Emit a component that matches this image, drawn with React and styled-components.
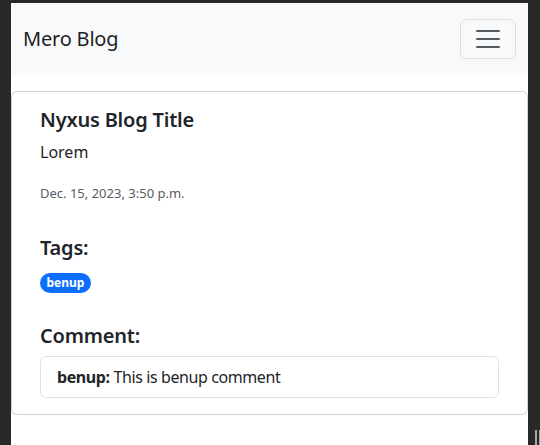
import React from "react";
import styled, { createGlobalStyle } from "styled-components";

const GlobalStyle = createGlobalStyle`
  * {
    box-sizing: border-box;
  }
  html,
  body {
    margin: 0;
    height: 100%;
    background-color: #282828;
  }
  body {
    font-family: "Noto Sans", "Open Sans", sans-serif;
    font-size: 16px;
    line-height: 1.5;
    color: #212529;
  }
`;

// dark browser frame around the page
const Frame = styled.div`
  position: relative;
  min-height: 100vh;
  padding: 3px 12px 0 11px;
`;

const Page = styled.div`
  min-height: calc(100vh - 3px);
  background-color: #fff;
`;

const Grip = styled.div`
  position: absolute;
  right: 0;
  bottom: 0;
  width: 6px;
  height: 15px;
  border-left: 2px solid #a9a9a9;
  border-right: 2px solid #a9a9a9;
  margin-right: -1px;
`;

const Navbar = styled.nav`
  height: 72px;
  padding: 0 12px;
  display: flex;
  align-items: center;
  justify-content: space-between;
  background-color: #f8f9fa;
`;

const Brand = styled.a`
  font-size: 20px;
  line-height: 30px;
  letter-spacing: -0.2px;
  color: rgba(0, 0, 0, 0.9);
  text-decoration: none;
`;

const Toggler = styled.button`
  width: 56px;
  height: 40px;
  padding: 0;
  display: flex;
  align-items: center;
  justify-content: center;
  background: transparent;
  border: 1px solid rgba(0, 0, 0, 0.1);
  border-radius: 6px;
  cursor: pointer;
`;

const Main = styled.main`
  padding-top: 16px;
`;

const Card = styled.article`
  border: 1px solid rgba(0, 0, 0, 0.175);
  border-radius: 6px;
  background-color: #fff;
`;

const CardBody = styled.div`
  display: flex;
  flex-direction: column;
  align-items: flex-start;
  padding: 16px 28px;
`;

const Heading = styled.h5`
  margin: ${(p) => p.$top || 0}px 0 ${(p) => p.$bottom || 0}px;
  font-size: 20px;
  font-weight: 600;
  line-height: 24px;
  letter-spacing: -0.2px;
`;

const Text = styled.p`
  margin: 0 0 16px;
  line-height: 24px;
`;

const DateText = styled.small`
  font-size: 13px;
  color: #595c5f;
`;

const TagRow = styled.div`
  display: flex;
  gap: 4px;
  margin-top: 13px;
`;

const Badge = styled.span`
  height: 20px;
  padding: 0 6.5px;
  display: inline-flex;
  align-items: center;
  font-size: 12px;
  font-weight: 700;
  line-height: 1;
  color: #fff;
  background-color: #0d6efd;
  border-radius: 10px;
`;

const CommentList = styled.ul`
  align-self: stretch;
  margin: 8px 0 0;
  padding: 0;
  list-style: none;
  border: 1px solid #dee2e6;
  border-radius: 6px;
`;

const CommentItem = styled.li`
  padding: 8px 16px;
  line-height: 24px;
  letter-spacing: -0.4px;
`;

const Author = styled.strong`
  font-weight: 700;
`;

const MenuIcon = () => (
  <svg width="30" height="30" viewBox="0 0 30 30">
    <path
      d="M4 7h22M4 15h22M4 23h22"
      stroke="rgba(33,37,41,0.75)"
      strokeWidth="2"
      strokeLinecap="round"
    />
  </svg>
);

const post = {
  title: "Nyxus Blog Title",
  body: "Lorem",
  date: "Dec. 15, 2023, 3:50 p.m.",
  tags: ["benup"],
  comments: [{ user: "benup", text: "This is benup comment" }],
};

const App = () => {
  return (
    <Frame>
      <GlobalStyle />
      <Page>
        <Navbar>
          <Brand href="#">Mero Blog</Brand>
          <Toggler aria-label="Toggle navigation">
            <MenuIcon />
          </Toggler>
        </Navbar>
        <Main>
          <Card>
            <CardBody>
              <Heading $bottom={8}>{post.title}</Heading>
              <Text>{post.body}</Text>
              <Text>
                <DateText>{post.date}</DateText>
              </Text>
              <Heading $top={15}>Tags:</Heading>
              <TagRow>
                {post.tags.map((tag) => (
                  <Badge key={tag}>{tag}</Badge>
                ))}
              </TagRow>
              <Heading $top={31}>Comment:</Heading>
              <CommentList>
                {post.comments.map((c) => (
                  <CommentItem key={c.user}>
                    <Author>{c.user}:</Author> {c.text}
                  </CommentItem>
                ))}
              </CommentList>
            </CardBody>
          </Card>
        </Main>
      </Page>
      <Grip />
    </Frame>
  );
};

export default App;
